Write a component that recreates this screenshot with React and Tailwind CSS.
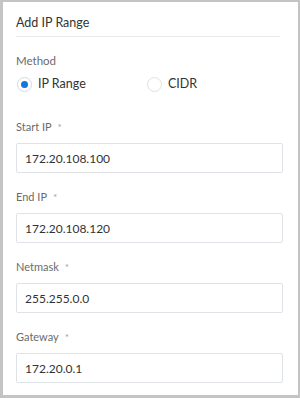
import { useState } from 'react';

const FIELDS = [
  { id: 'start', label: 'Start IP', value: '172.20.108.100' },
  { id: 'end', label: 'End IP', value: '172.20.108.120' },
  { id: 'mask', label: 'Netmask', value: '255.255.0.0' },
  { id: 'gw', label: 'Gateway', value: '172.20.0.1' },
];

function Radio({ checked, label, onClick }) {
  return (
    <button type="button" onClick={onClick} className="flex items-center gap-[6px] text-[12.5px] text-[#333]">
      <span className={`w-[15px] h-[15px] rounded-full border flex items-center justify-center bg-white ${checked ? 'border-[#d4d9e0]' : 'border-[#dde1e6]'}`}>
        {checked && <span className="w-[7px] h-[7px] rounded-full bg-[#1677d8]" />}
      </span>
      {label}
    </button>
  );
}

export default function App() {
  const [method, setMethod] = useState('range');
  const [values, setValues] = useState(FIELDS.map(f => f.value));

  return (
    <div className="w-[300px] h-[398px] bg-[#c4c4c4] pt-[2px] pl-[3px] pr-[2px] pb-[3px]" style={{ fontFamily: 'Lato, "Open Sans", sans-serif' }}>
      <div className="h-full bg-white pl-[13px] pr-[15px]">
        <div className="pt-[13px] pb-[5px] mr-[3px] border-b border-[#e8eaee]">
          <h2 className="text-[12.5px] leading-[16px] text-[#333]">Add IP Range</h2>
        </div>

        <div className="mt-[15px] text-[11.5px] leading-[18px] text-[#6b6b6b]">Method</div>
        <div className="mt-[4px] flex items-center h-[20px] pl-[1px]">
          <div className="w-[130px]">
            <Radio checked={method === 'range'} label="IP Range" onClick={() => setMethod('range')} />
          </div>
          <Radio checked={method === 'cidr'} label="CIDR" onClick={() => setMethod('cidr')} />
        </div>

        <div className="mt-[24px] flex flex-col gap-[15px]">
          {FIELDS.map((f, i) => (
            <div key={f.id}>
              <div className="text-[11px] leading-[18px] text-[#6b6b6b] flex items-center gap-[6px]">
                {f.label}
                <span className="text-[#9aa3ad] text-[10px]">*</span>
              </div>
              <input
                value={values[i]}
                onChange={e => setValues(v => v.map((x, j) => (j === i ? e.target.value : x)))}
                className="mt-[7px] w-full h-[30px] border border-[#dfe3e8] rounded-[2px] px-[8px] text-[12px] text-[#333] outline-none"
              />
            </div>
          ))}
        </div>
      </div>
    </div>
  );
}
